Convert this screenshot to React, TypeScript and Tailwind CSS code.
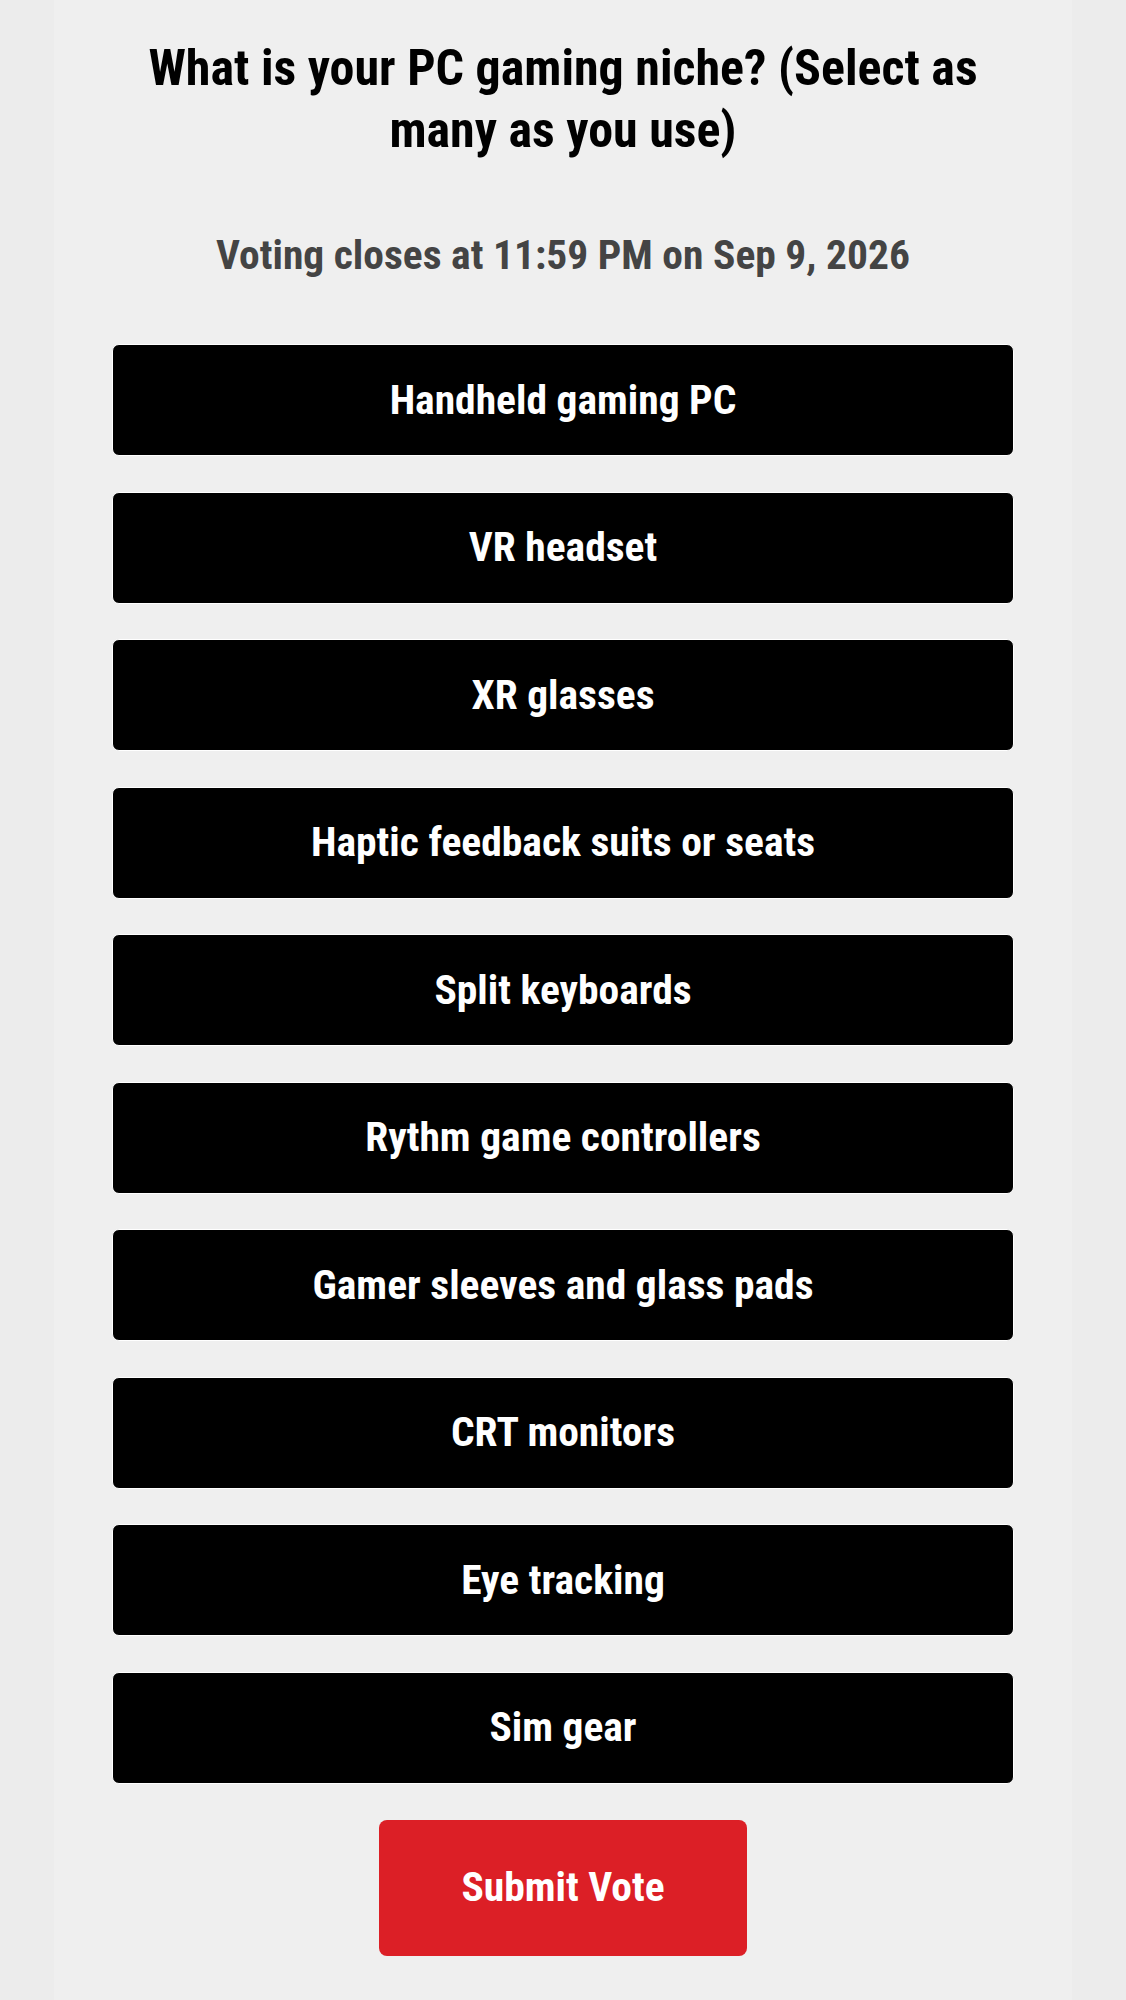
import React from "react";

const options = [
  "Handheld gaming PC",
  "VR headset",
  "XR glasses",
  "Haptic feedback suits or seats",
  "Split keyboards",
  "Rythm game controllers",
  "Gamer sleeves and glass pads",
  "CRT monitors",
  "Eye tracking",
  "Sim gear",
];

export default function App() {
  return (
    <div
      className="min-h-[2000px] w-full bg-[#ececec]"
      style={{ fontFamily: '"Roboto Condensed", "Liberation Sans Narrow", "DejaVu Sans Condensed", Roboto, sans-serif' }}
    >
      <div className="mx-auto min-h-[2000px] w-[1018px] bg-[#efefef] px-[58px] pt-[37px]">
        <h1 className="text-center text-[50px] font-bold leading-[62px] text-black">
          What is your PC gaming niche? (Select as many as you use)
        </h1>
        <p className="mt-[70px] text-center text-[41.5px] font-bold leading-[48px] text-[#444444]">
          Voting closes at 11:59 PM on Sep 9, 2026
        </p>
        <div className="mt-[65px] flex flex-col gap-[35.5px]">
          {options.map((o) => (
            <button
              key={o}
              className="flex h-[112px] w-full items-center justify-center rounded-[7px] border border-white bg-black text-[41.5px] font-bold text-white"
            >
              {o}
            </button>
          ))}
        </div>
        <div className="mt-[36px] flex justify-center">
          <button className="flex h-[136px] w-[368px] items-center justify-center rounded-[8px] bg-[#dc1f26] text-[41.5px] font-bold text-white">
            Submit Vote
          </button>
        </div>
      </div>
    </div>
  );
}
